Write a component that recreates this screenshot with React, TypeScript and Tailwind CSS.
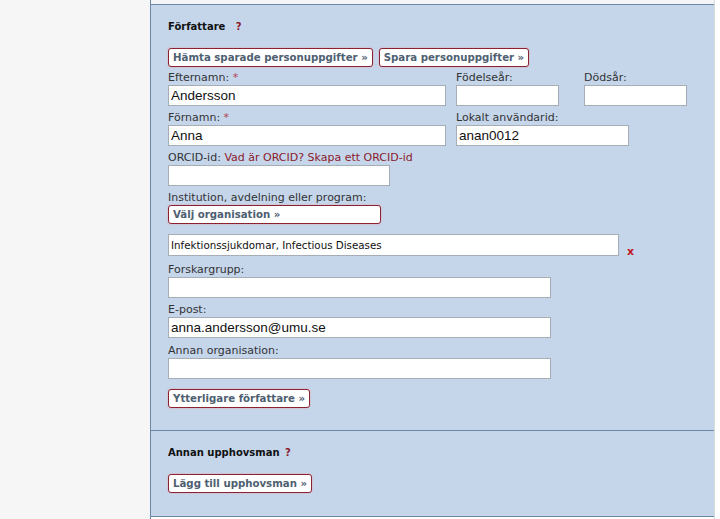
import React from "react";

const label = "block text-[11px] leading-[14px] text-[#333] font-['DejaVu_Sans',Verdana,sans-serif]";
const input =
  "block h-[21px] border border-[#a7adb4] bg-white px-[2px] text-[13.5px] text-[#111] font-['Liberation_Sans',Arial,sans-serif] outline-none";
const btn =
  "h-[19px] items-center rounded-[3px] border border-[#8a2232] bg-white px-[4px] text-[10.2px] font-bold text-[#4e6071] shadow-[0_0_2px_#e4a0a8] font-['DejaVu_Sans',Verdana,sans-serif]";

const Req = () => <span className="text-[#b0434f]">*</span>;

const Field = ({
  text,
  req,
  w,
  value = "",
  className = "",
}: {
  text: string;
  req?: boolean;
  w: string;
  value?: string;
  className?: string;
}) => (
  <div className={className}>
    <label className={label}>
      {text} {req && <Req />}
    </label>
    <input className={`${input} ${w}`} defaultValue={value} />
  </div>
);

export default function App() {
  return (
    <div className="flex min-h-[519px] bg-white font-['DejaVu_Sans',Verdana,sans-serif]">
      {/* left column */}
      <div className="w-[150px] shrink-0 bg-[#f6f6f6]" />

      {/* form panel */}
      <div className="w-[564px] shrink-0 border-l border-[#6e87a6]">
        <div className="h-[5px] border-b border-[#6e87a6] bg-[#f3f5f8]" />

        {/* Författare */}
        <section className="bg-[#c5d6eb] pl-[17px] pt-[15px] pb-[22px]">
          <h2 className="text-[10px] font-bold leading-[14px] text-[#111]">
            Författare <span className="ml-[7px] text-[#8b1a2a]">?</span>
          </h2>

          <div className="mt-[14px] flex gap-[6px]">
            <button className={`${btn} inline-flex`}>Hämta sparade personuppgifter »</button>
            <button className={`${btn} inline-flex`}>Spara personuppgifter »</button>
          </div>

          <div className="mt-[4px] flex">
            <Field text="Efternamn:" req w="w-[278px]" value="Andersson" />
            <Field text="Födelseår:" w="w-[103px]" className="ml-[10px]" />
            <Field text="Dödsår:" w="w-[103px]" className="ml-[25px]" />
          </div>

          <div className="mt-[5px] flex">
            <Field text="Förnamn:" req w="w-[278px]" value="Anna" />
            <Field text="Lokalt användarid:" w="w-[173px]" value="anan0012" className="ml-[10px]" />
          </div>

          <div className="mt-[5px]">
            <label className={label}>
              ORCID-id:{" "}
              <a className="text-[#8b1a2a]">Vad är ORCID?</a>{" "}
              <a className="text-[#8b1a2a]">Skapa ett ORCID-id</a>
            </label>
            <input className={`${input} w-[222px]`} />
          </div>

          <div className="mt-[5px]">
            <label className={label}>Institution, avdelning eller program:</label>
            <button className={`${btn} flex w-[213px]`}>Välj organisation »</button>
          </div>

          <div className="mt-[10px] flex items-end">
            <input
              className="block h-[22px] w-[451px] border border-[#a7adb4] bg-white px-[2px] text-[10.3px] text-[#111] outline-none font-['DejaVu_Sans',Verdana,sans-serif]"
              defaultValue="Infektionssjukdomar, Infectious Diseases"
            />
            <span className="ml-[8px] mb-[-3px] text-[11px] font-bold leading-[14px] text-[#c0151f]">x</span>
          </div>

          <Field text="Forskargrupp:" w="w-[383px]" className="mt-[7px]" />
          <Field
            text="E-post:"
            w="w-[383px]"
            value="anna.andersson@umu.se"
            className="mt-[5px]"
          />
          <Field text="Annan organisation:" w="w-[383px]" className="mt-[6px]" />

          <button className={`${btn} mt-[10px] flex`}>Ytterligare författare »</button>
        </section>

        {/* Annan upphovsman */}
        <section className="border-t border-b border-[#6e87a6] bg-[#c5d6eb] pl-[17px] pt-[15px] pb-[23px]">
          <h2 className="text-[10px] font-bold leading-[14px] text-[#111]">
            Annan upphovsman <span className="ml-[2px] text-[#8b1a2a]">?</span>
          </h2>
          <button className={`${btn} mt-[14px] flex`}>Lägg till upphovsman »</button>
        </section>
      </div>

      {/* right edge */}
      <div className="flex-1 border-l border-[#d6dcd8] bg-white" />
    </div>
  );
}
